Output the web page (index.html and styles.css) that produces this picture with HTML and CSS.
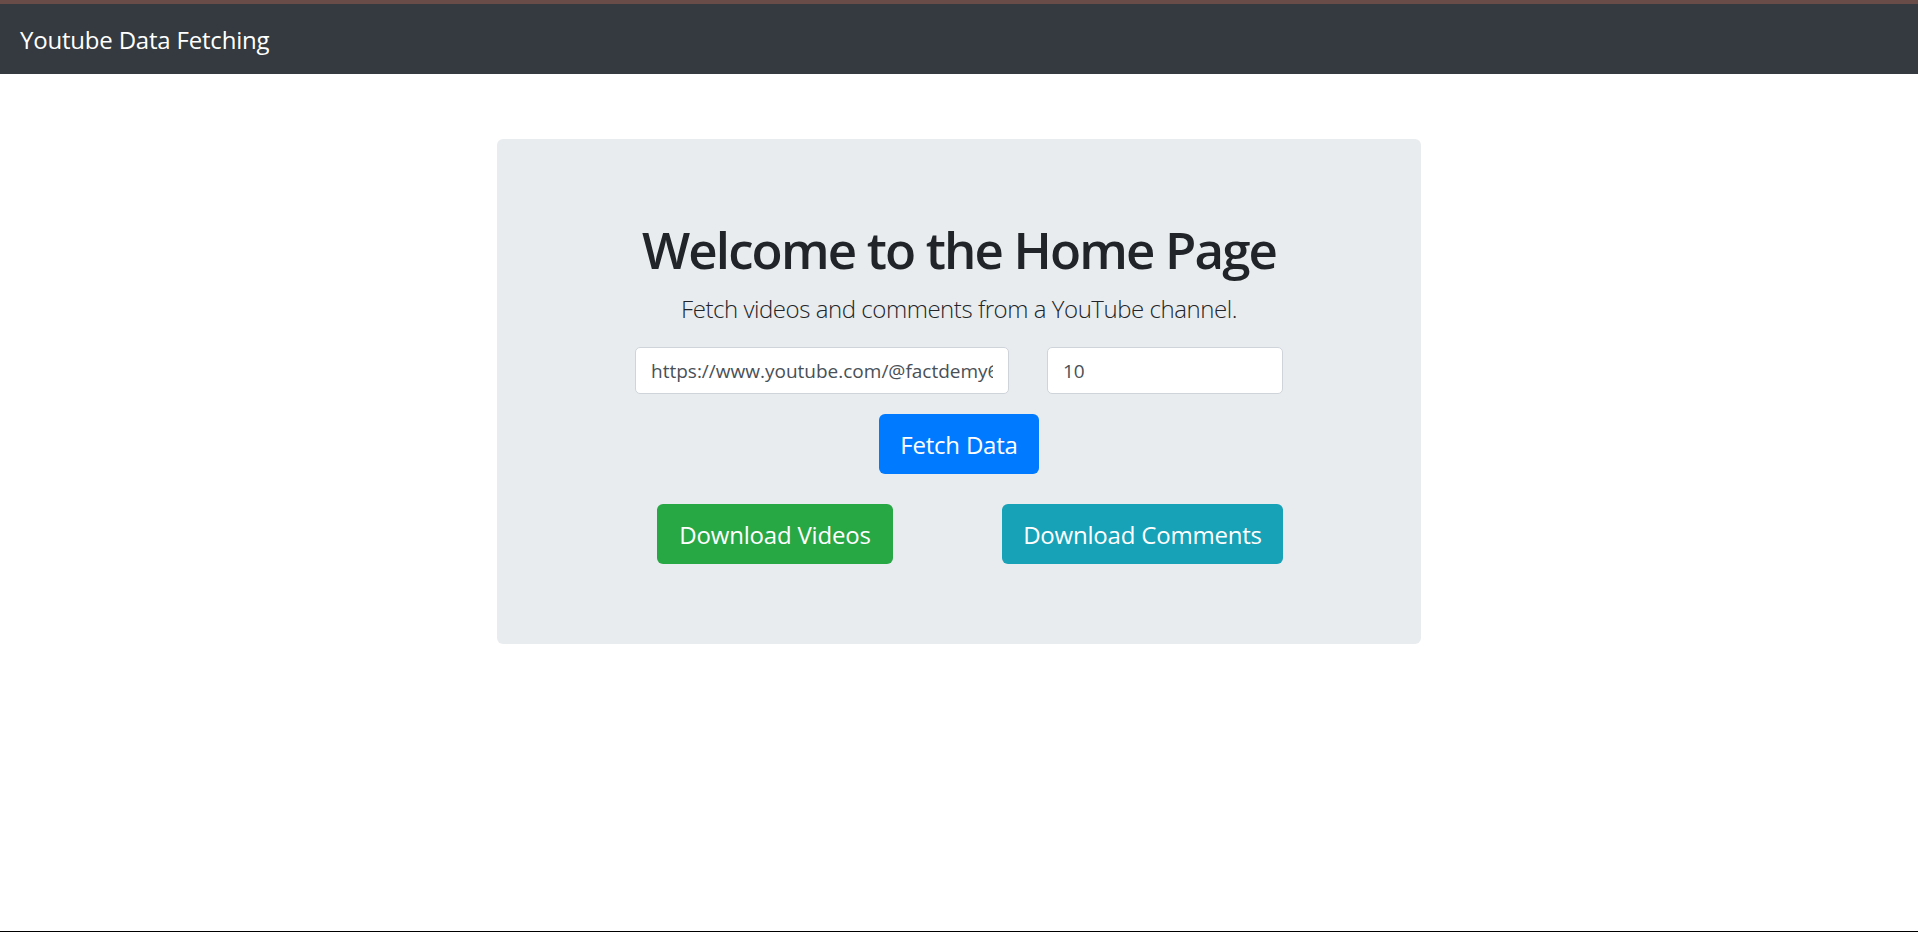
FILE: index.html
```html
<!DOCTYPE html>
<html lang="en">
<head>
<meta charset="utf-8">
<title>Youtube Data Fetching</title>
<link rel="stylesheet" href="styles.css">
</head>
<body>
<div class="top-strip"></div>
<nav class="navbar">
  <a class="brand" href="#">Youtube Data Fetching</a>
</nav>
<main class="jumbotron">
  <h1 class="title">Welcome to the Home Page</h1>
  <p class="lead">Fetch videos and comments from a YouTube channel.</p>
  <form class="form">
    <div class="inputs">
      <input class="field field-url" type="text" value="https://www.youtube.com/@factdemy6">
      <input class="field field-num" type="text" value="10">
    </div>
    <div class="fetch-row">
      <button type="button" class="btn btn-primary">Fetch Data</button>
    </div>
    <div class="download-row">
      <button type="button" class="btn btn-success">Download Videos</button>
      <button type="button" class="btn btn-info">Download Comments</button>
    </div>
  </form>
</main>
</body>
</html>
```
FILE: styles.css
```css
* { box-sizing: border-box; }
html, body { margin: 0; padding: 0; }
body {
  min-height: 100vh;
  background: #fff;
  font-family: "Open Sans", "Noto Sans", "Liberation Sans", sans-serif;
  color: #212529;
  border-bottom: 1px solid #000;
}
.top-strip {
  height: 4px;
  background: #694c48;
}
.navbar {
  height: 70px;
  background: #343a40;
  display: flex;
  align-items: center;
  padding: 0 20px;
}
.brand {
  color: #fff;
  text-decoration: none;
  font-size: 24px;
  line-height: 30px;
  letter-spacing: -0.2px;
  margin-top: 2px;
}
.jumbotron {
  width: 924px;
  margin: 65px auto 0;
  background: #e9ecef;
  border-radius: 6px;
  padding: 80px 40px 80px;
  display: flex;
  flex-direction: column;
  align-items: center;
}
.title {
  margin: 0 0 11px;
  font-size: 51px;
  line-height: 61px;
  font-weight: 600;
  letter-spacing: -1.85px;
  color: #212529;
}
.lead {
  margin: 0 0 20px;
  font-size: 24px;
  line-height: 36px;
  font-weight: 300;
  letter-spacing: -0.45px;
  color: #212529;
}
.form {
  width: 648px;
  display: flex;
  flex-direction: column;
}
.inputs {
  display: flex;
  justify-content: space-between;
}
.field {
  height: 47px;
  border: 1px solid #ced4da;
  border-radius: 5px;
  background: #fff;
  padding: 0 15px;
  font-family: "Open Sans", "Noto Sans", sans-serif;
  font-size: 19px;
  color: #495057;
  outline: none;
}
.field-url { width: 374px; }
.field-num { width: 236px; }
.fetch-row {
  display: flex;
  justify-content: center;
  margin-top: 20px;
}
.download-row {
  display: flex;
  justify-content: space-between;
  margin-top: 30px;
  padding-left: 22px;
}
.btn {
  height: 60px;
  border: 0;
  border-radius: 6px;
  color: #fff;
  font-family: "Open Sans", "Noto Sans", sans-serif;
  font-size: 24px;
  letter-spacing: -0.2px;
  padding: 0 12px;
  cursor: pointer;
}
.btn-primary { background: #007bff; width: 160px; }
.btn-success { background: #28a745; width: 236px; }
.btn-info { background: #17a2b8; width: 281px; }
```
